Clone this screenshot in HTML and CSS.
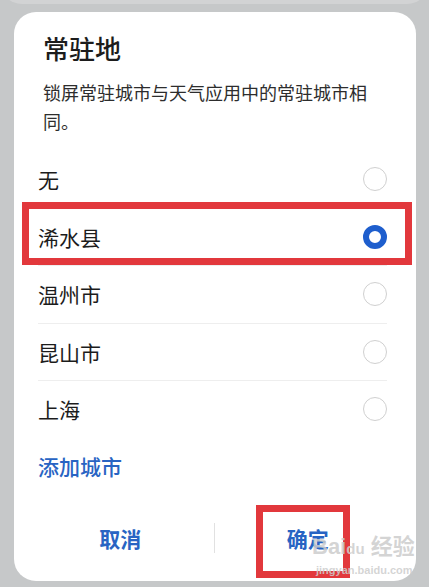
FILE: index.html
```html
<!DOCTYPE html>
<html>
  <head>
    <title>常驻地</title>
    <link rel="stylesheet" href="styles.css">
  </head>

<body>
  <div class = "back-card"></div>

  <div class = "sheet">
    <p class = "title">常驻地</p>
    <p class = "desc">锁屏常驻城市与天气应用中的常驻城市相同。</p>

    <div class = "city-list">
      <div class = "city-row"><span>无</span><span class = "radio"></span></div>
      <div class = "city-row"><span>浠水县</span><span class = "radio radio-on"></span></div>
      <div class = "city-row"><span>温州市</span><span class = "radio"></span></div>
      <div class = "city-row"><span>昆山市</span><span class = "radio"></span></div>
      <div class = "city-row"><span>上海</span><span class = "radio"></span></div>
    </div>

    <p class = "add-city">添加城市</p>

    <div class = "footer">
      <button class = "footer-button">取消</button>
      <span class = "footer-line"></span>
      <button class = "footer-button">确定</button>
    </div>

    <div class = "mark mark-row"></div>
    <div class = "mark mark-ok"></div>

    <div class = "watermark">
      <span class = "wm-big">Bai<span class = "wm-paw">du</span> 经验</span>
      <span class = "wm-small">jingyan.baidu.com</span>
    </div>
  </div>
</body>
</html>
```

FILE: styles.css
```css
body {
  margin: 0;
  background-color: rgb(198, 200, 201);
  font-family: "Noto Sans CJK SC", "Noto Sans", sans-serif;
  color: rgb(28, 28, 28);
  height: 587px;
  overflow: hidden;
}

.back-card {
  position: absolute;
  left: 0;
  right: 0;
  top: -20px;
  height: 24px;
  background-color: rgb(210, 211, 212);
  border-radius: 0 0 22px 22px;
}

.sheet {
  position: relative;
  margin: 12px 13px 0 14px;
  height: 569px;
  background-color: white;
  border-radius: 22px;
  display: flex;
  flex-direction: column;
}

.title {
  margin: 20px 0 0 29px;
  font-size: 26px;
  line-height: 32px;
  font-weight: 500;
}

.desc {
  margin: 14px 0 0 29px;
  width: 336px;
  font-size: 18px;
  line-height: 29px;
  color: rgb(45, 45, 45);
}

.city-list {
  margin-top: 14px;
  padding: 0 29px 0 24px;
}

.city-row {
  height: 57.5px;
  display: flex;
  justify-content: space-between;
  align-items: center;
  font-size: 21px;
  border-top: 1px solid rgb(238, 238, 238);
  box-sizing: border-box;
}

.city-row:first-child {
  border-top: none;
}

.radio {
  width: 24px;
  height: 24px;
  border: 1.5px solid rgb(208, 208, 208);
  border-radius: 50%;
  box-sizing: border-box;
}

.radio-on {
  border: 6px solid rgb(30, 94, 205);
}

.add-city {
  margin: 0 0 0 24px;
  height: 56px;
  display: flex;
  align-items: center;
  font-size: 21px;
  font-weight: 500;
  color: rgb(40, 100, 195);
}

.footer {
  margin-top: 14px;
  padding: 0 15px 0 13px;
  height: 60px;
  display: flex;
  align-items: center;
}

.footer-button {
  flex: 1;
  background-color: transparent;
  border: none;
  font-family: "Noto Sans CJK SC", sans-serif;
  font-size: 21px;
  font-weight: 700;
  color: rgb(40, 100, 195);
}

.footer-line {
  width: 1px;
  height: 30px;
  background-color: rgb(225, 225, 225);
}

.mark {
  position: absolute;
  border: 7px solid rgb(226, 56, 60);
}

.mark-row {
  left: 8px;
  top: 190px;
  width: 376px;
  height: 49px;
}

.mark-ok {
  left: 242px;
  top: 493px;
  width: 80px;
  height: 59px;
}

.watermark {
  position: absolute;
  left: 298px;
  top: 522px;
  display: flex;
  flex-direction: column;
  color: rgba(205, 205, 205, 0.85);
  font-family: "Liberation Sans", "Noto Sans CJK SC", sans-serif;
}

.wm-big {
  font-size: 22px;
  line-height: 26px;
  font-weight: 700;
}

.wm-paw {
  font-size: 15px;
}

.wm-small {
  font-size: 11px;
  line-height: 16px;
  font-weight: 700;
  margin-left: 4px;
}
```
